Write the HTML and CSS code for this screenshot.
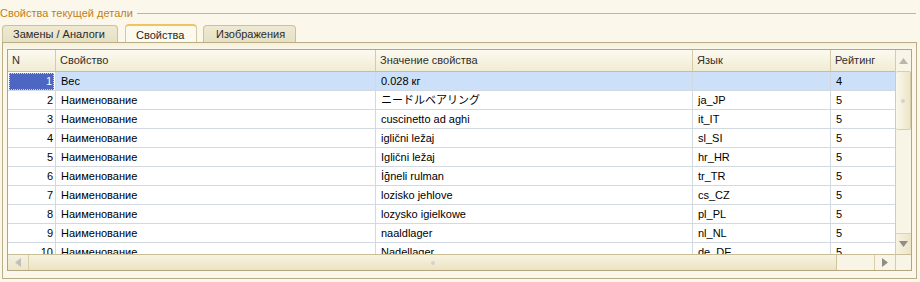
FILE: index.html
```html
<!DOCTYPE html>
<html lang="ru">
<head>
<meta charset="utf-8">
<title>Свойства текущей детали</title>
<link rel="stylesheet" href="styles.css">
</head>
<body>
<div class="group">
  <div class="group-head">
    <span class="group-title">Свойства текущей детали</span>
    <span class="group-line"></span>
  </div>
  <div class="tabs">
    <div class="tab tab-first">Замены / Аналоги</div>
    <div class="tab tab-active">Свойства</div>
    <div class="tab tab-last">Изображения</div>
  </div>
  <div class="panel">
    <div class="grid">
      <div class="grid-main">
        <div class="row head">
          <div class="cell num">N</div>
          <div class="cell">Свойство</div>
          <div class="cell">Значение свойства</div>
          <div class="cell">Язык</div>
          <div class="cell last">Рейтинг</div>
        </div>
        <div class="row selected">
          <div class="cell num"><span class="focus">1</span></div>
          <div class="cell">Вес</div>
          <div class="cell">0.028 кг</div>
          <div class="cell"></div>
          <div class="cell last">4</div>
        </div>
        <div class="row">
          <div class="cell num">2</div>
          <div class="cell">Наименование</div>
          <div class="cell">ニードルベアリング</div>
          <div class="cell">ja_JP</div>
          <div class="cell last">5</div>
        </div>
        <div class="row">
          <div class="cell num">3</div>
          <div class="cell">Наименование</div>
          <div class="cell">cuscinetto ad aghi</div>
          <div class="cell">it_IT</div>
          <div class="cell last">5</div>
        </div>
        <div class="row">
          <div class="cell num">4</div>
          <div class="cell">Наименование</div>
          <div class="cell">iglični ležaj</div>
          <div class="cell">sl_SI</div>
          <div class="cell last">5</div>
        </div>
        <div class="row">
          <div class="cell num">5</div>
          <div class="cell">Наименование</div>
          <div class="cell">Iglični ležaj</div>
          <div class="cell">hr_HR</div>
          <div class="cell last">5</div>
        </div>
        <div class="row">
          <div class="cell num">6</div>
          <div class="cell">Наименование</div>
          <div class="cell">İğneli rulman</div>
          <div class="cell">tr_TR</div>
          <div class="cell last">5</div>
        </div>
        <div class="row">
          <div class="cell num">7</div>
          <div class="cell">Наименование</div>
          <div class="cell">lozisko jehlove</div>
          <div class="cell">cs_CZ</div>
          <div class="cell last">5</div>
        </div>
        <div class="row">
          <div class="cell num">8</div>
          <div class="cell">Наименование</div>
          <div class="cell">lozysko igielkowe</div>
          <div class="cell">pl_PL</div>
          <div class="cell last">5</div>
        </div>
        <div class="row">
          <div class="cell num">9</div>
          <div class="cell">Наименование</div>
          <div class="cell">naaldlager</div>
          <div class="cell">nl_NL</div>
          <div class="cell last">5</div>
        </div>
        <div class="row">
          <div class="cell num">10</div>
          <div class="cell">Наименование</div>
          <div class="cell">Nadellager</div>
          <div class="cell">de_DE</div>
          <div class="cell last">5</div>
        </div>
      </div>
      <div class="vscroll">
        <div class="sbtn vbtn-up"><svg width="9" height="6" viewBox="0 0 9 6"><polygon points="0,6 9,6 4.5,0" fill="#b9b6ad"/></svg></div>
        <div class="vthumb"><span class="grip"></span></div>
        <div class="vtrack"></div>
        <div class="sbtn vbtn-down"><svg width="9" height="6" viewBox="0 0 9 6"><polygon points="0,0 9,0 4.5,6" fill="#8f8d86"/></svg></div>
      </div>
      <div class="hscroll">
        <div class="sbtn hbtn-left"><svg width="6" height="9" viewBox="0 0 6 9"><polygon points="6,0 6,9 0,4.5" fill="#c2bfb6"/></svg></div>
        <div class="hthumb"><span class="grip"></span></div>
        <div class="htrack"></div>
        <div class="sbtn hbtn-right"><svg width="6" height="9" viewBox="0 0 6 9"><polygon points="0,0 0,9 6,4.5" fill="#8f8d86"/></svg></div>
      </div>
      <div class="corner"></div>
    </div>
  </div>
</div>
</body>
</html>
```

FILE: styles.css
```css
* { box-sizing: border-box; }

html, body {
  margin: 0;
  padding: 0;
  background: #fbf8eb;
}

body {
  width: 920px;
  height: 282px;
  overflow: hidden;
  font-family: "Liberation Sans", "Noto Sans CJK JP", Arial, sans-serif;
  font-size: 11px;
  color: #000;
}

.group-head {
  display: flex;
  align-items: center;
  height: 24px;
  padding-top: 2px;
  padding-right: 4px;
}

.group-title {
  color: #c47d1c;
  white-space: nowrap;
  line-height: 14px;
}

.group-line {
  flex: 1;
  height: 1px;
  margin-left: 4px;
  background: #c3b68e;
}

.tabs {
  display: flex;
  align-items: flex-end;
  height: 18px;
  padding-left: 2px;
  gap: 7px;
}

.tab {
  height: 17px;
  line-height: 16px;
  padding: 0 12px 0 10px;
  color: #2a2a2a;
  background: linear-gradient(#efe9d2, #e7e0c4);
  border: 1px solid #cbc09c;
  border-bottom: none;
  border-radius: 4px 4px 0 0;
  white-space: nowrap;
}

.tab-first { width: 116px; }

.tab-active {
  height: 18px;
  width: 72px;
  padding-top: 1px;
  background: #fcf9ee;
  border-color: #d4c8a2;
  border-top: 2px solid #f0c461;
}

.tab-last {
  width: 93px;
  margin-left: -1px;
  padding-left: 12px;
}

.panel {
  margin-left: 2px;
  width: 915px;
  height: 237px;
  padding: 6px 4px 7px 4px;
  border: 1px solid #b9ad86;
  background: linear-gradient(#f6f0da 0, #fbf8eb 7px);
}

.grid {
  display: grid;
  grid-template-columns: 887px 16px;
  grid-template-rows: 204px 16px;
  width: 905px;
  border: 1px solid #b3a67f;
  background: #fff;
}

.grid-main {
  overflow: hidden;
  background: #fff;
}

.row {
  display: grid;
  grid-template-columns: 48px 320px 317px 138px 64px;
  height: 19px;
}

.cell {
  height: 19px;
  line-height: 18px;
  padding-left: 5px;
  border-right: 1px solid #d3d9e1;
  border-bottom: 1px solid #d3d9e1;
  white-space: nowrap;
  overflow: hidden;
}

.cell.last { border-right: none; }

.row .num {
  text-align: right;
  padding: 0 2px 0 0;
}

.row.head {
  height: 22px;
  background: linear-gradient(#fcfaf0, #f1ebd2);
}

.head .cell {
  height: 22px;
  line-height: 21px;
  padding-left: 4px;
  color: #2f2f2f;
  border-right-color: #d5cbaa;
  border-bottom-color: #c9bd98;
}

.head .cell.last { border-right: none; }

.head .num {
  text-align: left;
  padding-left: 4px;
}

.selected .cell { background: #cce1f9; }

.selected .num {
  padding: 1px 1px 1px 1px;
  background: #fff;
}

.focus {
  display: block;
  height: 17px;
  line-height: 15px;
  padding-right: 1px;
  background: #4c66c2;
  color: #fff;
  border: 1px dotted #c9d3f0;
}

.vscroll {
  display: flex;
  flex-direction: column;
  border-left: 1px solid #d6cca9;
  background: #f8f5e7;
}

.sbtn {
  display: flex;
  align-items: center;
  justify-content: center;
  flex: none;
}

.vbtn-up { height: 21px; }

.vbtn-down {
  height: 21px;
  border-top: 1px solid #ddd4b6;
  background: linear-gradient(90deg, #f6f2e0, #ece5c9);
}

.vthumb {
  height: 59px;
  display: flex;
  align-items: center;
  justify-content: center;
  border: 1px solid #d9cfad;
  border-left: none;
  border-radius: 2px;
  background: linear-gradient(90deg, #fbf8ec, #ede5c8);
}

.vtrack { flex: 1; }

.grip {
  width: 4px;
  height: 4px;
  border-radius: 50%;
  background: #d6d3c8;
}

.hscroll {
  display: flex;
  border-top: 1px solid #c9bd98;
  background: #f8f5e7;
}

.hbtn-left {
  width: 21px;
  border-right: 1px solid #d8ceab;
  background: linear-gradient(#f5f1e0, #ece5cb);
}

.hthumb {
  width: 808px;
  display: flex;
  align-items: center;
  justify-content: center;
  border-right: 1px solid #cfc4a0;
  background: linear-gradient(#f8f3e0, #ebe3c3);
}

.htrack { flex: 1; }

.hbtn-right {
  width: 21px;
  border-left: 1px solid #d8ceab;
}

.corner {
  border-top: 1px solid #c9bd98;
  border-left: 1px solid #d6cca9;
  background: #f8f5e7;
}
```
